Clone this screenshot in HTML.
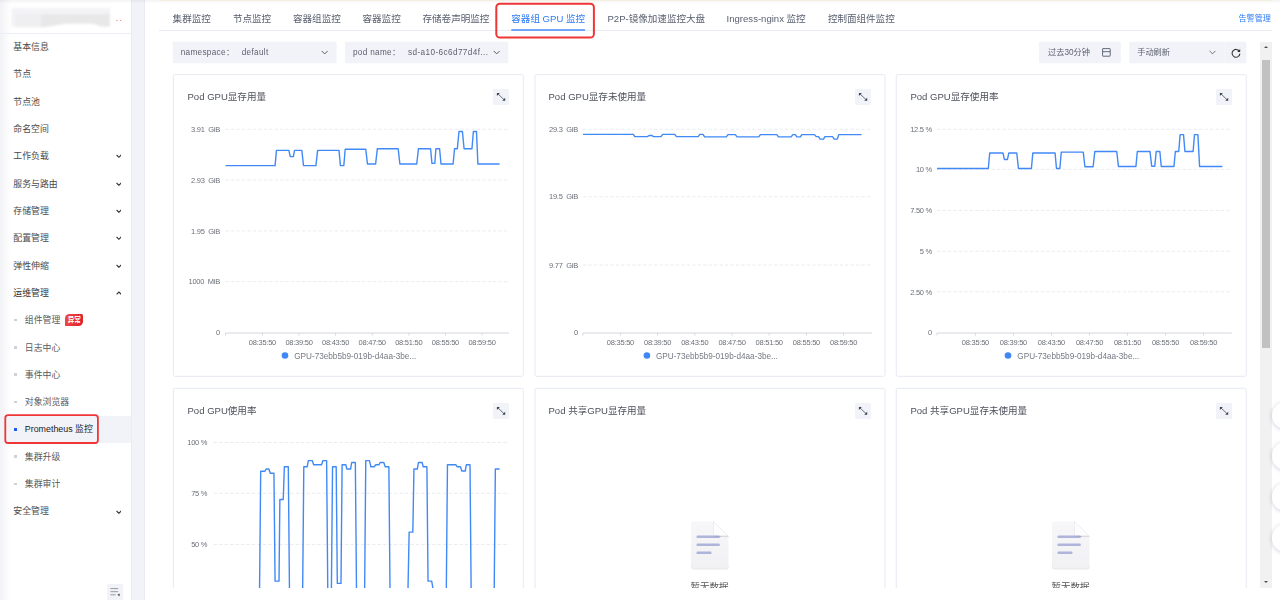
<!DOCTYPE html>
<html lang="zh-CN">
<head>
<meta charset="utf-8">
<title>Prometheus 监控 - 容器组 GPU 监控</title>
<style>
*{box-sizing:border-box;margin:0;padding:0}
html,body{width:1280px;height:600px;overflow:hidden;background:#fff}
body{position:relative;font-family:"Liberation Sans","Noto Sans CJK SC",sans-serif;color:#333;-webkit-font-smoothing:antialiased}
ul{list-style:none}
#sidebar{position:absolute;left:0;top:0;width:131px;height:600px;background:#fff;overflow:hidden}
#sidebar:before{content:"";position:absolute;left:0;top:0;width:11px;height:600px;background:linear-gradient(90deg,#f1f2f5,#f8f8fa 45%,#fff);}
#strip{position:absolute;left:131px;top:0;width:14px;height:600px;background:#f2f3f8;border-left:1px solid #ebecf3;border-right:1px solid #ebecf3}
#cluster{position:absolute;left:0;top:0;width:131px;height:33.5px;border-bottom:1.2px solid #eceef5}
#cluster .blursvg{position:absolute;left:0;top:0}
#cluster .blurx{position:absolute;left:11px;top:8px;width:99px;height:19px;background:linear-gradient(90deg,#f2f2f4 0,#f0f0f1 25%,#e9e9ea 35%,#e8e8e9 85%,#ececed 100%);border-radius:3px 3px 40px 40px/3px 3px 8px 8px;filter:blur(1.2px)}
#cluster .dots{position:absolute;left:115.3px;top:13.6px;font-size:9.5px;color:#e07a7a;letter-spacing:0.5px}
.mi,.si{position:absolute;left:0;width:131px;height:27.32px;line-height:27.32px;font-size:8.9px;color:#4a4a4a;white-space:nowrap}
.mi.open{color:#333}
.mi span{position:absolute;left:13.3px;top:0.8px}
.mi .chev{position:absolute;left:115.6px;top:12px}
.si{color:#5a5a5a}
.si span{position:absolute;left:24.8px;top:0.8px}
.si .dot{position:absolute;left:14px;top:12.4px;width:2.6px;height:2.6px;background:#cfd1d6}
.si.sel{background:#f2f3f8;color:#222}
.si.sel .dot{background:#1a5cf0}
.badge{position:absolute;left:65.3px;top:7.5px;width:18px;height:12.3px;line-height:12.3px;font-size:6.6px;font-style:normal;font-weight:bold;color:#fff;text-align:center;background:linear-gradient(100deg,#f04a4a,#de1f28);border-radius:4.5px 1.5px 4.5px 0.5px}
#collapse{position:absolute;left:107px;top:584px;width:16px;height:16px;background:#f2f3f8;border-radius:1px}
#main{position:absolute;left:146px;top:0;width:1126px;height:587.6px;overflow:hidden;will-change:transform}
#topshade{position:absolute;left:0;top:0;width:1280px;height:4px;background:linear-gradient(180deg,rgba(0,0,0,0.045),rgba(0,0,0,0));pointer-events:none}
#topyellow{position:absolute;left:159px;top:0;width:1113px;height:1px;background:#f4eedf;opacity:.9}
#tabs{position:absolute;left:159px;top:0;width:1113px;height:30.7px;border-bottom:1.1px solid #e9ebf3}
.tab{position:absolute;top:0;height:36px;line-height:38.2px;font-size:9.55px;color:#596070;white-space:nowrap}
#tabs .tab{margin-left:-159px}
.tab.act{color:#2d7cf6}
#alarm{position:absolute;left:1238.4px;top:0;line-height:38.4px;font-size:8.15px;color:#2d7cf6;white-space:nowrap}
.sel-box{position:absolute;top:42px;height:21.2px;font-size:8.2px;line-height:21.2px;color:#5b6170;white-space:nowrap}
.sel-box .lat{letter-spacing:0.32px}
.sel-box span{position:absolute;top:0}
.sel-box svg{position:absolute}
.card{position:absolute}
.ctitle{color:#4f525c !important;position:absolute;font-size:9.55px;line-height:16px;font-weight:normal;color:#444;white-space:nowrap}
.expand{position:absolute;width:16px;height:16px;background:#f2f3f8;border-radius:1px}
.expand svg{display:block}
.chart{position:absolute;left:0;top:0;overflow:visible}
.chart text{font-family:"Liberation Sans","Noto Sans CJK SC",sans-serif;fill:#6b6f78}
.yl{font-size:7.5px;letter-spacing:-0.25px}
.xl{font-size:7.5px;letter-spacing:-0.25px}
.lg{font-size:8.2px;fill:#767a83 !important}
.empty{position:absolute;left:50%;top:134.1px;width:60px;margin-left:-30.9px;text-align:center}
.empty svg{display:block;margin:0 auto}
.etext{margin-top:9.7px;font-size:9.5px;line-height:14px;color:#555;white-space:nowrap}
#sbar{position:absolute;left:1260.4px;top:41.6px;width:11.4px;height:546px;background:#f1f1f1}
#sbar .thumb{position:absolute;left:1.6px;top:18.6px;width:8.2px;height:288px;background:#c1c1c1}
#sbar .up,#sbar .down{position:absolute;left:3.2px;width:0;height:0;border-left:2.5px solid transparent;border-right:2.5px solid transparent}
#sbar .up{top:4.4px;border-bottom:2.8px solid #505050}
#sbar .down{bottom:4.6px;border-top:2.8px solid #505050}
.fab{position:absolute;left:1271.8px;width:27.3px;height:27.3px;border-radius:50%;background:#fff;box-shadow:0 0.7px 4.5px rgba(50,65,120,0.26)}
</style>
</head>
<body>
<aside id="sidebar">
<div id="cluster"><svg class="blursvg" viewBox="0 0 131 34" width="131" height="34"><defs><filter id="bl" x="-10%" y="-30%" width="120%" height="160%"><feGaussianBlur stdDeviation="1.1"/></filter></defs><g filter="url(#bl)"><path d="M11.5 8 H110 V26.5 H104 C98 26.5 97 23.6 90 23.4 H72 C58 23.6 50 27.3 40 27.3 H16 L11.5 26 Z" fill="#f3f3f6"/><path d="M41 14 H110 V26.5 H104 C98 26.5 97 23.6 90 23.4 H72 C60 23.6 52 26.5 41 27.2 Z" fill="#e8e8e9"/><path d="M16 14 H41 V27.2 H16 Z" fill="#efeff2"/></g></svg><div class="dots">··</div></div>
<ul>
<li class="mi" style="top:33.19px"><span>基本信息</span></li>
<li class="mi" style="top:60.51px"><span>节点</span></li>
<li class="mi" style="top:87.83px"><span>节点池</span></li>
<li class="mi" style="top:115.15px"><span>命名空间</span></li>
<li class="mi" style="top:142.47px"><span>工作负载</span><svg class="chev" viewBox="0 0 5.8 4.3" width="5.8" height="4.3"><path d="M0.6 1 L2.9 3.3 L5.2 1" fill="none" stroke="#333" stroke-width="1.1"/></svg></li>
<li class="mi" style="top:169.79px"><span>服务与路由</span><svg class="chev" viewBox="0 0 5.8 4.3" width="5.8" height="4.3"><path d="M0.6 1 L2.9 3.3 L5.2 1" fill="none" stroke="#333" stroke-width="1.1"/></svg></li>
<li class="mi" style="top:197.11px"><span>存储管理</span><svg class="chev" viewBox="0 0 5.8 4.3" width="5.8" height="4.3"><path d="M0.6 1 L2.9 3.3 L5.2 1" fill="none" stroke="#333" stroke-width="1.1"/></svg></li>
<li class="mi" style="top:224.43px"><span>配置管理</span><svg class="chev" viewBox="0 0 5.8 4.3" width="5.8" height="4.3"><path d="M0.6 1 L2.9 3.3 L5.2 1" fill="none" stroke="#333" stroke-width="1.1"/></svg></li>
<li class="mi" style="top:251.75px"><span>弹性伸缩</span><svg class="chev" viewBox="0 0 5.8 4.3" width="5.8" height="4.3"><path d="M0.6 1 L2.9 3.3 L5.2 1" fill="none" stroke="#333" stroke-width="1.1"/></svg></li>
<li class="mi open" style="top:279.07px"><span>运维管理</span><svg class="chev" viewBox="0 0 5.8 4.3" width="5.8" height="4.3"><path d="M0.6 3.3 L2.9 1 L5.2 3.3" fill="none" stroke="#333" stroke-width="1.1"/></svg></li>
<li class="mi" style="top:497.63px"><span>安全管理</span><svg class="chev" viewBox="0 0 5.8 4.3" width="5.8" height="4.3"><path d="M0.6 1 L2.9 3.3 L5.2 1" fill="none" stroke="#333" stroke-width="1.1"/></svg></li>
<li class="si" style="top:306.39px"><i class="dot"></i><span>组件管理</span><em class="badge">异常</em></li>
<li class="si" style="top:333.71px"><i class="dot"></i><span>日志中心</span></li>
<li class="si" style="top:361.03px"><i class="dot"></i><span>事件中心</span></li>
<li class="si" style="top:388.35px"><i class="dot"></i><span>对象浏览器</span></li>
<li class="si sel" style="top:415.67px"><i class="dot"></i><span>Prometheus 监控</span></li>
<li class="si" style="top:442.99px"><i class="dot"></i><span>集群升级</span></li>
<li class="si" style="top:470.31px"><i class="dot"></i><span>集群审计</span></li>
</ul>
<div id="collapse"><svg viewBox="0 0 16 16" width="16" height="16"><g stroke="#8a8e99" stroke-width="0.9" fill="none"><path d="M3.4 4.6 H11.2"/><path d="M3.4 7.7 H11.2"/><path d="M3.4 10.8 H8.6"/></g><path d="M10.3 10.8 L12.6 9.4 V12.2 Z" fill="#444"/></svg></div>
</aside>
<div id="strip"></div>
<main id="main">
<div style="position:absolute;left:-146px;top:0;width:1280px;height:600px">
<nav id="tabs">
<a class="tab" style="left:172.6px">集群监控</a>
<a class="tab" style="left:232.9px">节点监控</a>
<a class="tab" style="left:293px">容器组监控</a>
<a class="tab" style="left:362.5px">容器监控</a>
<a class="tab" style="left:422.5px">存储卷声明监控</a>
<a class="tab act" style="left:511.3px">容器组 GPU 监控</a>
<a class="tab" style="left:607.5px">P2P-镜像加速监控大盘</a>
<a class="tab" style="left:726.6px">Ingress-nginx 监控</a>
<a class="tab" style="left:827.9px">控制面组件监控</a>
</nav>
<a id="alarm">告警管理</a>
<svg viewBox="0 0 1280 600" width="1280" height="600" style="position:absolute;left:0;top:0"><g fill="#f2f3f8">
<rect x="172.75" y="41.75" width="163.85" height="21.4" rx="1.3"/>
<rect x="344.9" y="41.75" width="163.4" height="21.4" rx="1.3"/>
<rect x="1039" y="41.75" width="81.8" height="21.4" rx="1.3"/>
<rect x="1129.2" y="41.75" width="95.3" height="21.4" rx="1.3"/>
<rect x="1224.3" y="41.75" width="22.1" height="21.4" rx="1.3"/>
</g></svg>
<div class="sel-box" style="left:172.7px;width:164.4px"><span class="lat" style="left:8px">namespace：</span><span class="lat" style="left:69px">default</span><svg style="left:148px;top:8.2px" viewBox="0 0 7 5" width="7.4" height="5.3"><path d="M0.7 0.9 L3.5 3.7 L6.3 0.9" fill="none" stroke="#555" stroke-width="0.9"/></svg></div>
<div class="sel-box" style="left:345px;width:163.6px"><span class="lat" style="left:8px">pod name：</span><span class="lat" style="left:63px;letter-spacing:0.4px">sd-a10-6c6d77d4f...</span><svg style="left:148.3px;top:8.2px" viewBox="0 0 7 5" width="7.4" height="5.3"><path d="M0.7 0.9 L3.5 3.7 L6.3 0.9" fill="none" stroke="#555" stroke-width="0.9"/></svg></div>
<div class="sel-box" style="left:1039px;width:81.8px"><span style="left:9px">过去30分钟</span><svg style="left:63.2px;top:6.3px" viewBox="0 0 9 9" width="9" height="9"><rect x="0.6" y="0.6" width="7.6" height="7.6" rx="0.4" fill="none" stroke="#4a5265" stroke-width="0.85"/><path d="M0.6 3.7 H8.2" stroke="#4a5265" stroke-width="0.85"/></svg></div>
<div class="sel-box" style="left:1129.2px;width:95.2px"><span style="left:8px">手动刷新</span><svg style="left:79.7px;top:8.3px" viewBox="0 0 6 4.4" width="7" height="5.1"><path d="M0.5 0.8 L3 3.3 L5.5 0.8" fill="none" stroke="#555b68" stroke-width="0.75"/></svg></div>
<div class="sel-box" style="left:1224.4px;width:22.1px"><svg style="left:6.3px;top:5.6px" viewBox="0 0 10 10" width="10" height="10"><path d="M8.3 3.2 A3.9 3.9 0 1 0 8.9 5.6" fill="none" stroke="#333" stroke-width="1.05"/><path d="M9.2 0.9 V3.9 H6.2 Z" fill="#333"/></svg></div>
<section class="card" style="left:172px;top:73px;width:353px;height:305px">
<svg class="chart" viewBox="172 73 353 305" width="353" height="305">
<rect x="173.3" y="74.6" width="350.0" height="301.7" rx="1.6" fill="#fff" stroke="#e7e9f2" stroke-width="1"/>
<line x1="225.5" y1="129.3" x2="507.4" y2="129.3" stroke="#e5e7ee" stroke-width="0.8" stroke-dasharray="3.4 2.06"/>
<text x="220" y="132.0" text-anchor="end" class="yl">3.91&#160; GiB</text>
<line x1="225.5" y1="179.9" x2="507.4" y2="179.9" stroke="#e5e7ee" stroke-width="0.8" stroke-dasharray="3.4 2.06"/>
<text x="220" y="182.6" text-anchor="end" class="yl">2.93&#160; GiB</text>
<line x1="225.5" y1="230.9" x2="507.4" y2="230.9" stroke="#e5e7ee" stroke-width="0.8" stroke-dasharray="3.4 2.06"/>
<text x="220" y="233.6" text-anchor="end" class="yl">1.95&#160; GiB</text>
<line x1="225.5" y1="281.6" x2="507.4" y2="281.6" stroke="#e5e7ee" stroke-width="0.8" stroke-dasharray="3.4 2.06"/>
<text x="220" y="284.3" text-anchor="end" class="yl">1000&#160; MiB</text>
<text x="220" y="335.2" text-anchor="end" class="yl">0</text>
<line x1="225.5" y1="333.0" x2="508.9" y2="333.0" stroke="#d3d6de" stroke-width="1"/>
<line x1="225.5" y1="333.0" x2="225.5" y2="335.5" stroke="#d3d6de" stroke-width="1"/>
<line x1="262.4" y1="333.0" x2="262.4" y2="335.5" stroke="#d3d6de" stroke-width="1"/>
<text x="262.4" y="345" text-anchor="middle" class="xl">08:35:50</text>
<line x1="299.0" y1="333.0" x2="299.0" y2="335.5" stroke="#d3d6de" stroke-width="1"/>
<text x="299.0" y="345" text-anchor="middle" class="xl">08:39:50</text>
<line x1="335.59999999999997" y1="333.0" x2="335.59999999999997" y2="335.5" stroke="#d3d6de" stroke-width="1"/>
<text x="335.59999999999997" y="345" text-anchor="middle" class="xl">08:43:50</text>
<line x1="372.2" y1="333.0" x2="372.2" y2="335.5" stroke="#d3d6de" stroke-width="1"/>
<text x="372.2" y="345" text-anchor="middle" class="xl">08:47:50</text>
<line x1="408.79999999999995" y1="333.0" x2="408.79999999999995" y2="335.5" stroke="#d3d6de" stroke-width="1"/>
<text x="408.79999999999995" y="345" text-anchor="middle" class="xl">08:51:50</text>
<line x1="445.4" y1="333.0" x2="445.4" y2="335.5" stroke="#d3d6de" stroke-width="1"/>
<text x="445.4" y="345" text-anchor="middle" class="xl">08:55:50</text>
<line x1="482.0" y1="333.0" x2="482.0" y2="335.5" stroke="#d3d6de" stroke-width="1"/>
<text x="482.0" y="345" text-anchor="middle" class="xl">08:59:50</text>
<circle cx="285" cy="355.5" r="3.3" fill="#3f87f5"/>
<text x="294.2" y="358.9" class="lg">GPU-73ebb5b9-019b-d4aa-3be...</text>
<path d="M225.49 165.63 L275.07 165.63 L276.48 150.42 L288.87 150.42 L290.28 156.62 L293.38 156.62 L294.51 150.42 L301.83 150.42 L303.52 165.63 L315.92 165.63 L317.61 150.42 L339.01 150.42 L340.42 165.63 L343.8 165.63 L345.21 149.3 L365.77 149.3 L367.46 163.94 L375.63 163.94 L377.32 148.73 L398.17 148.73 L399.86 163.94 L416.76 163.94 L418.45 148.73 L430.56 148.73 L431.97 163.38 L434.79 163.38 L435.92 148.73 L439.58 148.73 L440.99 163.94 L453.1 163.94 L454.51 148.73 L457.32 148.73 L459.01 131.55 L462.39 131.55 L464.08 148.73 L471.97 148.73 L473.38 131.55 L476.48 131.55 L477.89 163.94 L499.58 163.94" fill="none" stroke="#4189f7" stroke-width="1.4" stroke-linejoin="round"/>
</svg>
<h3 class="ctitle" style="left:15.5px;top:16.1px">Pod GPU显存用量</h3>
<div class="expand" style="left:321.0px;top:16.0px"><svg viewBox="0 0 16 16" width="16" height="16"><path d="M4.9 4.8 L11.3 10.9" fill="none" stroke="#3a4458" stroke-width="0.75"/><path d="M3.9 3.9 H6.9 L3.9 6.9 Z M12.2 11.8 H9.2 L12.2 8.8 Z" fill="#3a4458"/></svg></div>
</section>
<section class="card" style="left:534px;top:73px;width:353px;height:305px">
<svg class="chart" viewBox="534 73 353 305" width="353" height="305">
<rect x="535.0" y="74.6" width="350.0" height="301.7" rx="1.6" fill="#fff" stroke="#e7e9f2" stroke-width="1"/>
<line x1="583" y1="129.3" x2="870.5" y2="129.3" stroke="#e5e7ee" stroke-width="0.8" stroke-dasharray="3.4 2.06"/>
<text x="578" y="132.0" text-anchor="end" class="yl">29.3&#160; GiB</text>
<line x1="583" y1="196.7" x2="870.5" y2="196.7" stroke="#e5e7ee" stroke-width="0.8" stroke-dasharray="3.4 2.06"/>
<text x="578" y="199.39999999999998" text-anchor="end" class="yl">19.5&#160; GiB</text>
<line x1="583" y1="265" x2="870.5" y2="265" stroke="#e5e7ee" stroke-width="0.8" stroke-dasharray="3.4 2.06"/>
<text x="578" y="267.7" text-anchor="end" class="yl">9.77&#160; GiB</text>
<text x="578" y="335.2" text-anchor="end" class="yl">0</text>
<line x1="583" y1="333.0" x2="872.0" y2="333.0" stroke="#d3d6de" stroke-width="1"/>
<line x1="583" y1="333.0" x2="583" y2="335.5" stroke="#d3d6de" stroke-width="1"/>
<line x1="620.4" y1="333.0" x2="620.4" y2="335.5" stroke="#d3d6de" stroke-width="1"/>
<text x="620.4" y="345" text-anchor="middle" class="xl">08:35:50</text>
<line x1="657.6" y1="333.0" x2="657.6" y2="335.5" stroke="#d3d6de" stroke-width="1"/>
<text x="657.6" y="345" text-anchor="middle" class="xl">08:39:50</text>
<line x1="694.8" y1="333.0" x2="694.8" y2="335.5" stroke="#d3d6de" stroke-width="1"/>
<text x="694.8" y="345" text-anchor="middle" class="xl">08:43:50</text>
<line x1="732.0" y1="333.0" x2="732.0" y2="335.5" stroke="#d3d6de" stroke-width="1"/>
<text x="732.0" y="345" text-anchor="middle" class="xl">08:47:50</text>
<line x1="769.2" y1="333.0" x2="769.2" y2="335.5" stroke="#d3d6de" stroke-width="1"/>
<text x="769.2" y="345" text-anchor="middle" class="xl">08:51:50</text>
<line x1="806.4" y1="333.0" x2="806.4" y2="335.5" stroke="#d3d6de" stroke-width="1"/>
<text x="806.4" y="345" text-anchor="middle" class="xl">08:55:50</text>
<line x1="843.6" y1="333.0" x2="843.6" y2="335.5" stroke="#d3d6de" stroke-width="1"/>
<text x="843.6" y="345" text-anchor="middle" class="xl">08:59:50</text>
<circle cx="646.9" cy="355.5" r="3.3" fill="#3f87f5"/>
<text x="655.9" y="358.9" class="lg">GPU-73ebb5b9-019b-d4aa-3be...</text>
<path d="M582.96 134.37 L633.38 134.37 L634.79 136.62 L647.46 136.62 L649.15 135.49 L651.97 135.49 L653.38 136.62 L660.99 136.62 L662.68 134.37 L674.79 134.37 L676.48 136.62 L698.17 136.62 L699.86 134.37 L702.96 134.37 L704.65 136.9 L726.34 136.9 L728.03 134.65 L735.35 134.65 L737.04 136.9 L758.73 136.9 L760.42 134.65 L776.76 134.65 L778.45 136.9 L791.13 136.9 L792.82 134.65 L795.35 134.65 L796.76 136.9 L800.42 136.9 L801.83 134.65 L814.51 134.65 L816.2 136.62 L818.45 136.62 L820.14 139.15 L823.52 139.15 L824.93 136.62 L832.54 136.62 L834.23 139.15 L837.32 139.15 L838.73 134.65 L861.55 134.65" fill="none" stroke="#4189f7" stroke-width="1.4" stroke-linejoin="round"/>
</svg>
<h3 class="ctitle" style="left:14.5px;top:16.1px">Pod GPU显存未使用量</h3>
<div class="expand" style="left:320.7px;top:16.0px"><svg viewBox="0 0 16 16" width="16" height="16"><path d="M4.9 4.8 L11.3 10.9" fill="none" stroke="#3a4458" stroke-width="0.75"/><path d="M3.9 3.9 H6.9 L3.9 6.9 Z M12.2 11.8 H9.2 L12.2 8.8 Z" fill="#3a4458"/></svg></div>
</section>
<section class="card" style="left:895px;top:73px;width:353px;height:305px">
<svg class="chart" viewBox="895 73 353 305" width="353" height="305">
<rect x="896.25" y="74.6" width="350.0" height="301.7" rx="1.6" fill="#fff" stroke="#e7e9f2" stroke-width="1"/>
<line x1="937" y1="129.3" x2="1230.3" y2="129.3" stroke="#e5e7ee" stroke-width="0.8" stroke-dasharray="3.4 2.06"/>
<text x="932" y="132.0" text-anchor="end" class="yl">12.5 %</text>
<line x1="937" y1="169.4" x2="1230.3" y2="169.4" stroke="#e5e7ee" stroke-width="0.8" stroke-dasharray="3.4 2.06"/>
<text x="932" y="172.1" text-anchor="end" class="yl">10 %</text>
<line x1="937" y1="210.4" x2="1230.3" y2="210.4" stroke="#e5e7ee" stroke-width="0.8" stroke-dasharray="3.4 2.06"/>
<text x="932" y="213.1" text-anchor="end" class="yl">7.50 %</text>
<line x1="937" y1="251.3" x2="1230.3" y2="251.3" stroke="#e5e7ee" stroke-width="0.8" stroke-dasharray="3.4 2.06"/>
<text x="932" y="254.0" text-anchor="end" class="yl">5 %</text>
<line x1="937" y1="291.8" x2="1230.3" y2="291.8" stroke="#e5e7ee" stroke-width="0.8" stroke-dasharray="3.4 2.06"/>
<text x="932" y="294.5" text-anchor="end" class="yl">2.50 %</text>
<text x="932" y="335.2" text-anchor="end" class="yl">0</text>
<line x1="937" y1="333.0" x2="1231.8" y2="333.0" stroke="#d3d6de" stroke-width="1"/>
<line x1="937" y1="333.0" x2="937" y2="335.5" stroke="#d3d6de" stroke-width="1"/>
<line x1="975.4" y1="333.0" x2="975.4" y2="335.5" stroke="#d3d6de" stroke-width="1"/>
<text x="975.4" y="345" text-anchor="middle" class="xl">08:35:50</text>
<line x1="1013.43" y1="333.0" x2="1013.43" y2="335.5" stroke="#d3d6de" stroke-width="1"/>
<text x="1013.43" y="345" text-anchor="middle" class="xl">08:39:50</text>
<line x1="1051.46" y1="333.0" x2="1051.46" y2="335.5" stroke="#d3d6de" stroke-width="1"/>
<text x="1051.46" y="345" text-anchor="middle" class="xl">08:43:50</text>
<line x1="1089.49" y1="333.0" x2="1089.49" y2="335.5" stroke="#d3d6de" stroke-width="1"/>
<text x="1089.49" y="345" text-anchor="middle" class="xl">08:47:50</text>
<line x1="1127.52" y1="333.0" x2="1127.52" y2="335.5" stroke="#d3d6de" stroke-width="1"/>
<text x="1127.52" y="345" text-anchor="middle" class="xl">08:51:50</text>
<line x1="1165.55" y1="333.0" x2="1165.55" y2="335.5" stroke="#d3d6de" stroke-width="1"/>
<text x="1165.55" y="345" text-anchor="middle" class="xl">08:55:50</text>
<line x1="1203.58" y1="333.0" x2="1203.58" y2="335.5" stroke="#d3d6de" stroke-width="1"/>
<text x="1203.58" y="345" text-anchor="middle" class="xl">08:59:50</text>
<circle cx="1008" cy="355.5" r="3.3" fill="#3f87f5"/>
<text x="1017.3" y="358.9" class="lg">GPU-73ebb5b9-019b-d4aa-3be...</text>
<path d="M937.04 168.45 L988.31 168.45 L989.72 152.96 L1002.96 152.96 L1004.37 159.44 L1007.46 159.44 L1008.87 152.96 L1016.76 152.96 L1018.45 168.45 L1031.41 168.45 L1032.82 152.96 L1055.07 152.96 L1056.48 168.45 L1059.86 168.45 L1061.27 152.11 L1083.24 152.11 L1084.93 166.76 L1093.1 166.76 L1094.79 151.55 L1116.76 151.55 L1118.45 166.48 L1135.92 166.48 L1137.32 151.55 L1150.0 151.55 L1151.69 166.2 L1154.79 166.2 L1156.2 151.55 L1159.86 151.55 L1161.27 166.48 L1173.94 166.48 L1175.35 151.55 L1178.73 151.55 L1180.14 134.65 L1183.52 134.65 L1184.93 151.55 L1193.1 151.55 L1194.51 134.65 L1197.89 134.65 L1199.58 166.48 L1222.39 166.48" fill="none" stroke="#4189f7" stroke-width="1.4" stroke-linejoin="round"/>
</svg>
<h3 class="ctitle" style="left:15.45px;top:16.1px">Pod GPU显存使用率</h3>
<div class="expand" style="left:320.95px;top:16.0px"><svg viewBox="0 0 16 16" width="16" height="16"><path d="M4.9 4.8 L11.3 10.9" fill="none" stroke="#3a4458" stroke-width="0.75"/><path d="M3.9 3.9 H6.9 L3.9 6.9 Z M12.2 11.8 H9.2 L12.2 8.8 Z" fill="#3a4458"/></svg></div>
</section>
<section class="card" style="left:172px;top:387px;width:353px;height:305px">
<svg class="chart" viewBox="172 387 353 305" width="353" height="305">
<rect x="173.3" y="388.3" width="350.0" height="301.7" rx="1.6" fill="#fff" stroke="#e7e9f2" stroke-width="1"/>
<line x1="213.7" y1="442.5" x2="508.9" y2="442.5" stroke="#e5e7ee" stroke-width="0.8" stroke-dasharray="3.4 2.06"/>
<text x="207.3" y="445.2" text-anchor="end" class="yl">100 %</text>
<line x1="213.7" y1="493.3" x2="508.9" y2="493.3" stroke="#e5e7ee" stroke-width="0.8" stroke-dasharray="3.4 2.06"/>
<text x="207.3" y="496.0" text-anchor="end" class="yl">75 %</text>
<line x1="213.7" y1="544.5" x2="508.9" y2="544.5" stroke="#e5e7ee" stroke-width="0.8" stroke-dasharray="3.4 2.06"/>
<text x="207.3" y="547.2" text-anchor="end" class="yl">50 %</text>
<path d="M259.35 611.28 L260.7 471.28 L264.93 471.28 L266.06 469.03 L268.87 469.03 L270.28 473.25 L273.94 473.25 L275.07 581.14 L279.01 581.14 L279.86 499.45 L283.24 499.45 L284.37 466.77 L288.31 466.77 L289.66 611.28 M302.46 611.28 L303.8 466.77 L307.18 466.77 L308.31 460.58 L312.25 460.58 L313.66 464.8 L321.55 464.8 L322.96 460.58 L326.62 460.58 L327.96 611.28 M331.19 611.28 L332.54 466.77 L336.2 466.77 L337.32 583.39 L340.99 583.39 L342.11 464.8 L345.77 464.8 L346.9 469.03 L350.56 469.03 L351.69 462.55 L355.35 462.55 L356.69 611.28 M364.44 611.28 L365.77 460.58 L369.44 460.58 L370.85 466.77 L374.23 466.77 L375.63 464.8 L379.01 464.8 L380.14 462.55 L383.8 462.55 L385.21 466.77 L388.87 466.77 L390.22 611.28 M407.55 611.28 L409.15 532.13 L412.82 532.13 L413.94 469.03 L417.32 469.03 L418.45 462.55 L422.11 462.55 L423.24 466.77 L426.9 466.77 L428.03 581.14 L431.69 581.14 L436.93 611.28 M446.12 611.28 L447.46 464.8 L455.92 464.8 L457.04 466.77 L460.42 466.77 L461.83 471.0 L465.21 471.0 L466.34 464.8 L470.0 464.8 L471.34 611.28 M494.0 611.28 L495.35 469.03 L499.58 469.03" fill="none" stroke="#4189f7" stroke-width="1.4" stroke-linejoin="round"/>
</svg>
<h3 class="ctitle" style="left:15.5px;top:15.8px">Pod GPU使用率</h3>
<div class="expand" style="left:321.0px;top:15.7px"><svg viewBox="0 0 16 16" width="16" height="16"><path d="M4.9 4.8 L11.3 10.9" fill="none" stroke="#3a4458" stroke-width="0.75"/><path d="M3.9 3.9 H6.9 L3.9 6.9 Z M12.2 11.8 H9.2 L12.2 8.8 Z" fill="#3a4458"/></svg></div>
</section>
<section class="card" style="left:534px;top:387px;width:353px;height:305px">
<svg class="chart" viewBox="534 387 353 305" width="353" height="305">
<rect x="535.0" y="388.3" width="350.0" height="301.7" rx="1.6" fill="#fff" stroke="#e7e9f2" stroke-width="1"/>

</svg>
<h3 class="ctitle" style="left:14.5px;top:15.8px">Pod 共享GPU显存用量</h3>
<div class="expand" style="left:320.7px;top:15.7px"><svg viewBox="0 0 16 16" width="16" height="16"><path d="M4.9 4.8 L11.3 10.9" fill="none" stroke="#3a4458" stroke-width="0.75"/><path d="M3.9 3.9 H6.9 L3.9 6.9 Z M12.2 11.8 H9.2 L12.2 8.8 Z" fill="#3a4458"/></svg></div><div class="empty">
<svg viewBox="0 0 38 49" width="38" height="49">
<defs><linearGradient id="dg5" x1="0" y1="0" x2="0" y2="1"><stop offset="0" stop-color="#f7f7f9"/><stop offset="1" stop-color="#f1f1f4"/></linearGradient></defs>
<path d="M2 0.5 H22.5 L37.5 15.5 V46 Q37.5 48 35.5 48 H2 Q0 48 0 46 V2.5 Q0 0.5 2 0.5 Z" fill="url(#dg5)"/>
<path d="M0.3 45.5 Q0.3 48 2.5 48 H35 Q37.5 48 37.5 45.5" fill="none" stroke="#e4e4e9" stroke-width="0.8"/>
<path d="M22.5 0.5 L37.5 15.5 H25 Q22.5 15.5 22.5 13 Z" fill="#fdfdfe" stroke="#e1e1e6" stroke-width="0.5"/>
<path d="M24 15.2 H37.2" stroke="#c9c9cf" stroke-width="0.7"/>
<rect x="5.5" y="14.4" width="23.3" height="2.7" rx="1.2" fill="#aeb4da"/>
<rect x="5.5" y="22.4" width="23.3" height="2.7" rx="1.2" fill="#aeb4da"/>
<rect x="5.5" y="30.4" width="15" height="2.7" rx="1.2" fill="#aeb4da"/>
<path d="M23 15.6 Q27 16.6 31 15.6 L29 15.2 H23.5 Z" fill="#9a9aa5" opacity="0.55"/>
</svg>
<div class="etext">暂无数据</div>
</div>
</section>
<section class="card" style="left:895px;top:387px;width:353px;height:305px">
<svg class="chart" viewBox="895 387 353 305" width="353" height="305">
<rect x="896.25" y="388.3" width="350.0" height="301.7" rx="1.6" fill="#fff" stroke="#e7e9f2" stroke-width="1"/>

</svg>
<h3 class="ctitle" style="left:15.45px;top:15.8px">Pod 共享GPU显存未使用量</h3>
<div class="expand" style="left:320.95px;top:15.7px"><svg viewBox="0 0 16 16" width="16" height="16"><path d="M4.9 4.8 L11.3 10.9" fill="none" stroke="#3a4458" stroke-width="0.75"/><path d="M3.9 3.9 H6.9 L3.9 6.9 Z M12.2 11.8 H9.2 L12.2 8.8 Z" fill="#3a4458"/></svg></div><div class="empty">
<svg viewBox="0 0 38 49" width="38" height="49">
<defs><linearGradient id="dg6" x1="0" y1="0" x2="0" y2="1"><stop offset="0" stop-color="#f7f7f9"/><stop offset="1" stop-color="#f1f1f4"/></linearGradient></defs>
<path d="M2 0.5 H22.5 L37.5 15.5 V46 Q37.5 48 35.5 48 H2 Q0 48 0 46 V2.5 Q0 0.5 2 0.5 Z" fill="url(#dg6)"/>
<path d="M0.3 45.5 Q0.3 48 2.5 48 H35 Q37.5 48 37.5 45.5" fill="none" stroke="#e4e4e9" stroke-width="0.8"/>
<path d="M22.5 0.5 L37.5 15.5 H25 Q22.5 15.5 22.5 13 Z" fill="#fdfdfe" stroke="#e1e1e6" stroke-width="0.5"/>
<path d="M24 15.2 H37.2" stroke="#c9c9cf" stroke-width="0.7"/>
<rect x="5.5" y="14.4" width="23.3" height="2.7" rx="1.2" fill="#aeb4da"/>
<rect x="5.5" y="22.4" width="23.3" height="2.7" rx="1.2" fill="#aeb4da"/>
<rect x="5.5" y="30.4" width="15" height="2.7" rx="1.2" fill="#aeb4da"/>
<path d="M23 15.6 Q27 16.6 31 15.6 L29 15.2 H23.5 Z" fill="#9a9aa5" opacity="0.55"/>
</svg>
<div class="etext">暂无数据</div>
</div>
</section>
<div id="sbar"><i class="up"></i><div class="thumb"></div><i class="down"></i></div>
</div>
</main>
<div class="fab" style="top:401.5px"></div>
<div class="fab" style="top:442.45px"></div>
<div class="fab" style="top:483.4px"></div>
<div class="fab" style="top:524.3px"></div>
<svg id="anno" viewBox="0 0 1280 600" width="1280" height="600" style="position:absolute;left:0;top:0;pointer-events:none">
<rect x="511.3" y="29.3" width="73.7" height="1.4" fill="#3b84f6"/>
<rect x="496.3" y="3.7" width="97.6" height="33.8" rx="3.6" fill="none" stroke="#f03535" stroke-width="2"/>
<rect x="5.3" y="415.1" width="92.6" height="27.9" rx="2.8" fill="none" stroke="#f03535" stroke-width="1.8"/>
</svg>
<div id="topshade"></div>
<div id="topyellow"></div>
</body>
</html>
